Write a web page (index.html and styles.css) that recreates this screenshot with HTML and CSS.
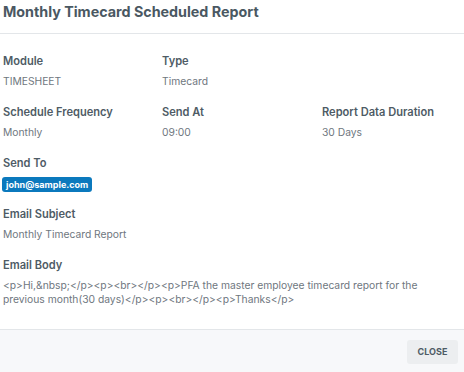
FILE: index.html
```html
<!DOCTYPE html>
<html lang="en">
<head>
  <meta charset="UTF-8" />
  <meta name="viewport" content="width=device-width, initial-scale=1.0"/>
  <title>Monthly Timecard Scheduled Report</title>
  <link rel="stylesheet" href="styles.css">
</head>
<body>
  <div class="modal">
    <div class="modalHeader">
      <h2>Monthly Timecard Scheduled Report</h2>
    </div>

    <div class="modalBody">
      <div class="row">
        <div class="field">
          <div class="label">Module</div>
          <div class="value">TIMESHEET</div>
        </div>
        <div class="field">
          <div class="label">Type</div>
          <div class="value">Timecard</div>
        </div>
      </div>

      <div class="row">
        <div class="field">
          <div class="label">Schedule Frequency</div>
          <div class="value">Monthly</div>
        </div>
        <div class="field">
          <div class="label">Send At</div>
          <div class="value">09:00</div>
        </div>
        <div class="field">
          <div class="label">Report Data Duration</div>
          <div class="value">30 Days</div>
        </div>
      </div>

      <div class="row chipRow">
        <div class="field wide">
          <div class="label">Send To</div>
          <div class="chips">
            <span class="chip">john@sample.com</span>
          </div>
        </div>
      </div>

      <div class="row">
        <div class="field wide">
          <div class="label">Email Subject</div>
          <div class="value">Monthly Timecard Report</div>
        </div>
      </div>

      <div class="row">
        <div class="field wide">
          <div class="label">Email Body</div>
          <div class="value body">&lt;p&gt;Hi,&amp;nbsp;&lt;/p&gt;&lt;p&gt;&lt;br&gt;&lt;/p&gt;&lt;p&gt;PFA the master employee timecard report for the previous month(30 days)&lt;/p&gt;&lt;p&gt;&lt;br&gt;&lt;/p&gt;&lt;p&gt;Thanks&lt;/p&gt;</div>
        </div>
      </div>
    </div>

    <div class="modalFooter">
      <button class="closeBtn">CLOSE</button>
    </div>
  </div>
</body>
</html>
```

FILE: styles.css
```css
body {
    margin: 0;
    background-color: white;
    font-family: Inter, "Noto Sans", sans-serif;
}

.modal {
    width: 464px;
    height: 372px;
    display: flex;
    flex-direction: column;
}

.modalHeader {
    height: 33px;
    border-bottom: 1px solid #e3e6e9;
    padding: 0 3px;
    display: flex;
    align-items: center;
}

.modalHeader h2 {
    margin: 0;
    margin-top: -11px;
    font-size: 14.3px;
    font-weight: 700;
    color: #4a5862;
}

.modalBody {
    flex: 1;
    padding: 20px 3px 0 3px;
}

.row {
    display: flex;
    margin-bottom: 17px;
}

.row.chipRow {
    margin-bottom: 15px;
}

.field {
    width: 159px;
    flex-shrink: 0;
}

.field + .field {
    width: 160px;
}

.field.wide {
    width: auto;
    flex: 1;
}

.label {
    font-size: 11.1px;
    font-weight: 600;
    color: #4e5b65;
    line-height: 14px;
}

.value {
    font-size: 10.3px;
    color: #6f7780;
    line-height: 14px;
    margin-top: 6px;
}

.value.body {
    padding-right: 30px;
}

.chips {
    margin-top: 7px;
    display: flex;
}

.chip {
    background-color: #0b79bd;
    color: white;
    font-size: 9px;
    font-weight: 700;
    padding: 1px 4px;
    border-radius: 3px;
    line-height: 13px;
    margin-left: -1px;
}

.modalFooter {
    height: 42px;
    border-top: 1px solid #e3e6e9;
    background-color: #f7f8fa;
    display: flex;
    justify-content: flex-end;
    align-items: center;
    padding-right: 6px;
}

.closeBtn {
    border: none;
    background-color: #eceef0;
    color: #4e5b65;
    font-family: Inter, "Noto Sans", sans-serif;
    font-size: 9px;
    font-weight: 700;
    width: 51px;
    height: 24px;
    border-radius: 3px;
    margin-top: 1px;
}
```
